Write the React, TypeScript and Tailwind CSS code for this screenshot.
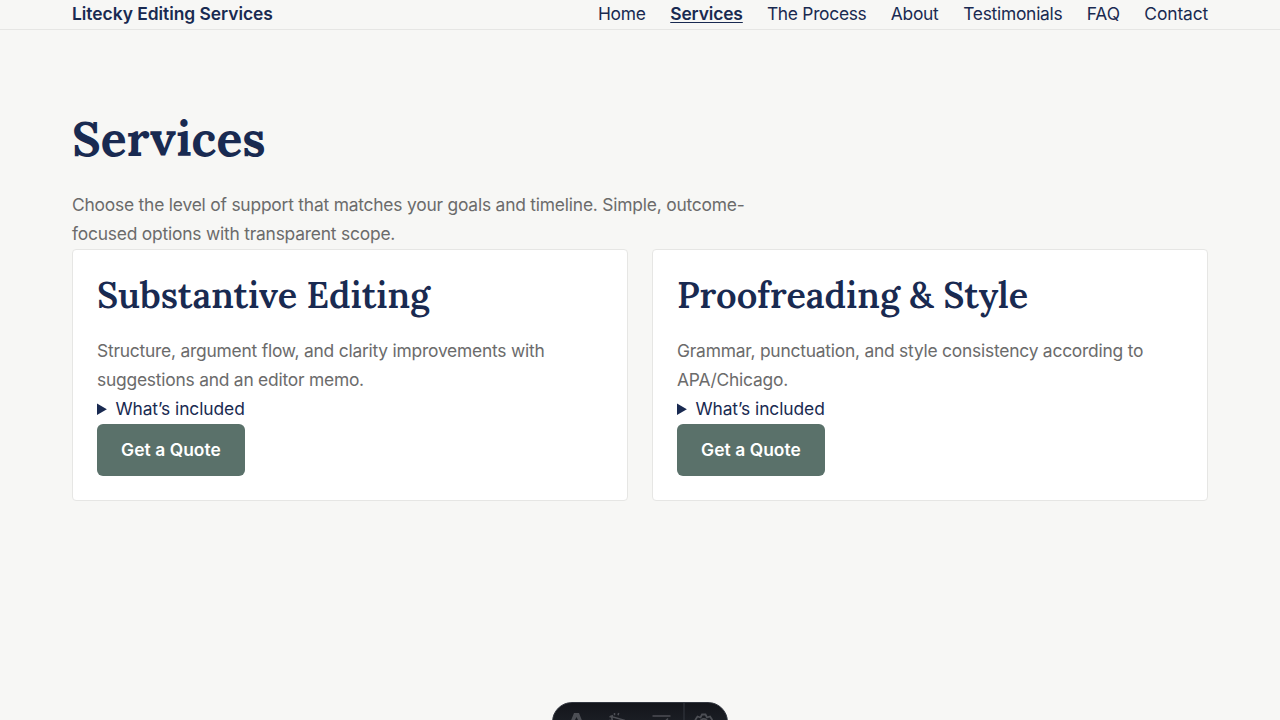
const nav = [
  { label: 'Home', style: 'w-[48.3px] tracking-[-0.3px]' },
  { label: 'Services', style: 'w-[72.7px] tracking-[-0.12px] font-semibold underline decoration-1 underline-offset-[1.5px]' },
  { label: 'The Process', style: 'w-[99.9px] tracking-[-0.29px]' },
  { label: 'About', style: 'w-[48.3px] tracking-[-0.3px]' },
  { label: 'Testimonials', style: 'w-[99.5px] tracking-[-0.25px]' },
  { label: 'FAQ', style: 'w-[33.7px] tracking-normal' },
  { label: 'Contact', style: 'w-[63.7px] tracking-[-0.1px]' },
];

const services = [
  { title: 'Substantive Editing', text: 'Structure, argument flow, and clarity improvements with suggestions and an editor memo.' },
  { title: 'Proofreading & Style', text: 'Grammar, punctuation, and style consistency according to APA/Chicago.' },
];

function Toolbar() {
  return (
    <div className="absolute top-[702px] left-[552px] flex h-10 w-44 overflow-hidden rounded-[20px] border border-[#343841] bg-linear-to-b from-[#13151a] to-[#242730]">
      <svg className="h-[38px] w-[174px]" viewBox="553 703 174 38" fill="none" stroke="#4c4e54" strokeWidth="1.5">
        <path d="M570 723 574 713H579L583 723H579.5L576.5 717L573.5 723Z" fill="#4c4e54" stroke="none" />
        <path d="M613 723 611.5 716.5 625 720.5M609.5 717 613 715.5M614.5 713V715.2M618.7 713 618 715.2M609 720.5H612" />
        <path d="M652.5 716H670.5" strokeWidth="1.6" />
        <path d="M664.5 722 668 718.5" />
        <path d="M684 703V741" stroke="#343841" strokeWidth="1" />
        <path d="M695.5 723V719.5L697.5 716.5 700.5 717.5 702 714.5H705.5L707 717.5 710 716.5 712 719.5V723" strokeWidth="1.8" />
        <circle cx="703.8" cy="722.5" r="3.6" strokeWidth="1.8" />
      </svg>
    </div>
  );
}

export default function App() {
  return (
    <div className="relative h-screen overflow-hidden bg-[#f7f7f5] font-['Inter',sans-serif] text-[17.4px] leading-[29px] tracking-[-0.22px] text-[#192a51]">
      <header className="h-[30px] border-b border-[#e6e6e4] leading-[27px]">
        <div className="flex justify-between px-[72px]">
          <a className="font-semibold tracking-[-0.02px]">Litecky Editing Services</a>
          <nav className="flex gap-6">
            {nav.map((n) => (
              <a key={n.label} className={`whitespace-nowrap ${n.style}`}>{n.label}</a>
            ))}
          </nav>
        </div>
      </header>
      <main className="px-[72px] pt-[80px]">
        <h1 className="font-['Lora',serif] text-[48px] font-bold leading-[58px] tracking-normal">Services</h1>
        <p className="mt-[22px] mb-px w-[680px] tracking-[-0.205px] text-[#6b6b6b]">Choose the level of support that matches your goals and timeline. Simple, outcome-focused options with transparent scope.</p>
        <div className="grid grid-cols-2 gap-6">
          {services.map((s) => (
            <article key={s.title} className="h-[252px] rounded border border-[#e6e6e4] bg-white p-6">
              <h2 className="font-['Lora',serif] text-[36px] font-semibold leading-[43px] tracking-normal">{s.title}</h2>
              <p className="mt-[19px] text-[#6b6b6b]">{s.text}</p>
              <details className="mb-px"><summary className="tracking-[-0.08px]">What’s included</summary></details>
              <a className="flex h-[52px] w-[148px] items-center justify-center rounded-md bg-[#5a716a] pb-0.5 font-semibold tracking-[0.06px] text-white">Get a Quote</a>
            </article>
          ))}
        </div>
      </main>
      <Toolbar />
    </div>
  );
}
